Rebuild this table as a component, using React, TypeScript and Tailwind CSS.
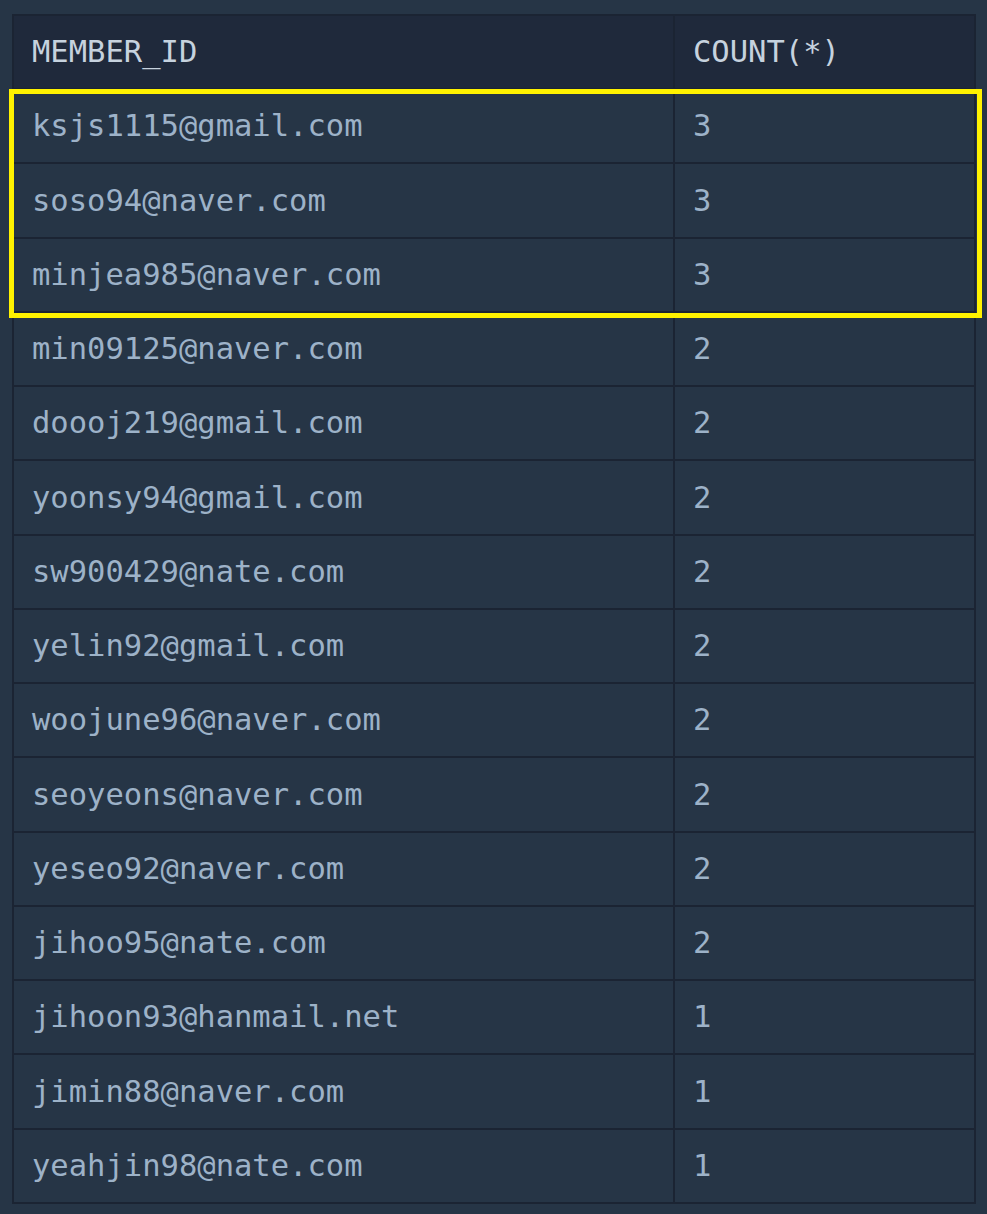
const rows: [string, number][] = [
  ['ksjs1115@gmail.com', 3],
  ['soso94@naver.com', 3],
  ['minjea985@naver.com', 3],
  ['min09125@naver.com', 2],
  ['doooj219@gmail.com', 2],
  ['yoonsy94@gmail.com', 2],
  ['sw900429@nate.com', 2],
  ['yelin92@gmail.com', 2],
  ['woojune96@naver.com', 2],
  ['seoyeons@naver.com', 2],
  ['yeseo92@naver.com', 2],
  ['jihoo95@nate.com', 2],
  ['jihoon93@hanmail.net', 1],
  ['jimin88@naver.com', 1],
  ['yeahjin98@nate.com', 1],
]

export default function App() {
  return (
    <div className="w-[987px] h-[1214px] bg-[#263546] pt-[14px] pl-[12px] font-['DejaVu_Sans_Mono',monospace] text-[30.5px]">
      <div className="relative w-[964px]">
        <table className="w-full border-collapse table-fixed">
          <colgroup>
            <col className="w-[661px]" />
            <col />
          </colgroup>
          <thead>
            <tr className="h-[74px] bg-[#1f293b] text-[#c6d2de]">
              <th className="border-2 border-[#1b2433] pl-[18px] text-left font-normal">MEMBER_ID</th>
              <th className="border-2 border-[#1b2433] pl-[18px] text-left font-normal">COUNT(*)</th>
            </tr>
          </thead>
          <tbody>
            {rows.map(([id, n]) => (
              <tr key={id} className="h-[74.25px] text-[#9db2c8]">
                <td className="border-2 border-[#1b2433] pl-[18px]">{id}</td>
                <td className="border-2 border-[#1b2433] pl-[18px]">{n}</td>
              </tr>
            ))}
          </tbody>
        </table>
        <div className="absolute left-[-3px] top-[75px] w-[973px] h-[229px] border-[5px] border-[#fff200] pointer-events-none" />
      </div>
    </div>
  )
}
